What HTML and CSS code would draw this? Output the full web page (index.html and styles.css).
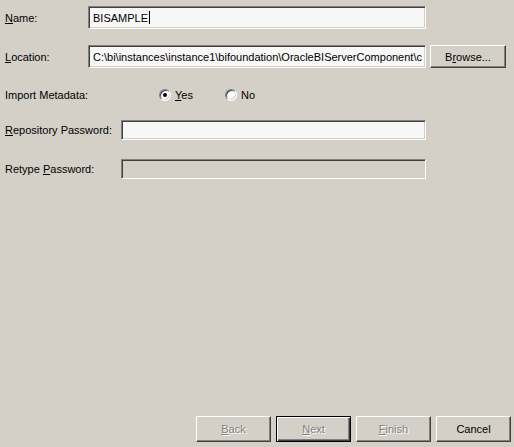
FILE: index.html
```html
<!DOCTYPE html>
<html>
<head>
<meta charset="utf-8">
<link rel="stylesheet" href="styles.css">
</head>
<body>
<div class="page">
  <div class="form">
    <div class="row row-name">
      <div class="label"><u>N</u>ame:</div>
      <div class="field field-wide"><span class="txt">BISAMPLE</span><span class="caret"></span></div>
    </div>
    <div class="row row-loc">
      <div class="label"><u>L</u>ocation:</div>
      <div class="field field-wide"><span class="txt">C:\bi\instances\instance1\bifoundation\OracleBIServerComponent\c</span></div>
      <div class="btn btn-browse"><span>B<u>r</u>owse...</span></div>
    </div>
    <div class="row row-import">
      <div class="label label-import">Import Metadata:</div>
      <div class="radios">
        <div class="radio-item"><span class="radio checked"></span><span class="rtext"><u>Y</u>es</span></div>
        <div class="radio-item item-no"><span class="radio"></span><span class="rtext">No</span></div>
      </div>
    </div>
    <div class="row row-pw">
      <div class="label label-pw"><u>R</u>epository Password:</div>
      <div class="field field-pw"></div>
    </div>
    <div class="row row-retype">
      <div class="label label-pw">Retype <u>P</u>assword:</div>
      <div class="field field-pw disabled"></div>
    </div>
  </div>
  <div class="buttons">
    <div class="btn disabled-btn"><u>B</u>ack</div>
    <div class="btn default-btn disabled-btn"><u>N</u>ext</div>
    <div class="btn disabled-btn"><u>F</u>inish</div>
    <div class="btn">Cancel</div>
  </div>
</div>
</body>
</html>
```
FILE: styles.css
```css
* { box-sizing: border-box; }
html, body {
  margin: 0;
  padding: 0;
  background: #d4d0c8;
}
body {
  font-family: "Liberation Sans", Arial, sans-serif;
  font-size: 11px;
  color: #000;
}
u { text-decoration: underline; text-underline-offset: 1px; }
.page {
  width: 514px;
  height: 447px;
  display: flex;
  flex-direction: column;
}
.form {
  padding-top: 6px;
  display: flex;
  flex-direction: column;
}
.row {
  display: flex;
  align-items: center;
}
.label {
  width: 88px;
  padding-left: 5px;
  flex: none;
}
.field {
  height: 23px;
  background: #f7f7f7;
  border-top: 1px solid #808080;
  border-left: 1px solid #808080;
  border-right: 1px solid #ffffff;
  border-bottom: 1px solid #ffffff;
  box-shadow: inset 1px 1px 0 #404040, inset -1px -1px 0 #d4d0c8;
  display: flex;
  align-items: center;
  padding-left: 4px;
  overflow: hidden;
  white-space: nowrap;
  flex: none;
}
.field-wide { width: 338px; }
.caret {
  display: inline-block;
  width: 1px;
  height: 13px;
  background: #000;
  margin-left: 1px;
}
.row-loc { margin-top: 16px; }
.btn {
  width: 75px;
  height: 26px;
  display: flex;
  align-items: center;
  justify-content: center;
  background: #d4d0c8;
  border-top: 1px solid #ffffff;
  border-left: 1px solid #ffffff;
  border-right: 1px solid #404040;
  border-bottom: 1px solid #404040;
  box-shadow: inset -1px -1px 0 #808080, inset 1px 1px 0 #d4d0c8;
  flex: none;
}
.btn-browse {
  width: 76px;
  height: 23px;
  margin-left: 4px;
}
.row-import {
  margin-top: 20px;
  height: 13px;
}
.label-import { width: 159px; }
.radios { display: flex; align-items: center; }
.radio-item { display: flex; align-items: center; }
.item-no { margin-left: 32px; }
.radio {
  width: 12px;
  height: 12px;
  border-radius: 50%;
  background: #ffffff;
  border: 1px solid;
  border-color: #808080 #ffffff #ffffff #808080;
  box-shadow: inset 1px 1px 0 #404040, inset -1px -1px 0 #d4d0c8;
  position: relative;
  flex: none;
}
.radio.checked::after {
  content: "";
  position: absolute;
  left: 3px;
  top: 3px;
  width: 4px;
  height: 4px;
  border-radius: 50%;
  background: #000;
}
.rtext { margin-left: 4px; }
.row-pw { margin-top: 19px; }
.row-retype { margin-top: 19px; }
.label-pw { width: 121px; }
.field-pw { width: 305px; height: 20px; }
.field.disabled { background: #d4d0c8; }
.buttons {
  margin-top: auto;
  display: flex;
  justify-content: flex-end;
  gap: 5px;
  padding-right: 3px;
  padding-bottom: 5px;
}
.disabled-btn {
  color: #808080;
  text-shadow: 1px 1px 0 #ffffff;
}
.default-btn {
  border: 1px solid #000;
  box-shadow: inset 1px 1px 0 #ffffff, inset -1px -1px 0 #404040, inset -2px -2px 0 #808080;
}
```
